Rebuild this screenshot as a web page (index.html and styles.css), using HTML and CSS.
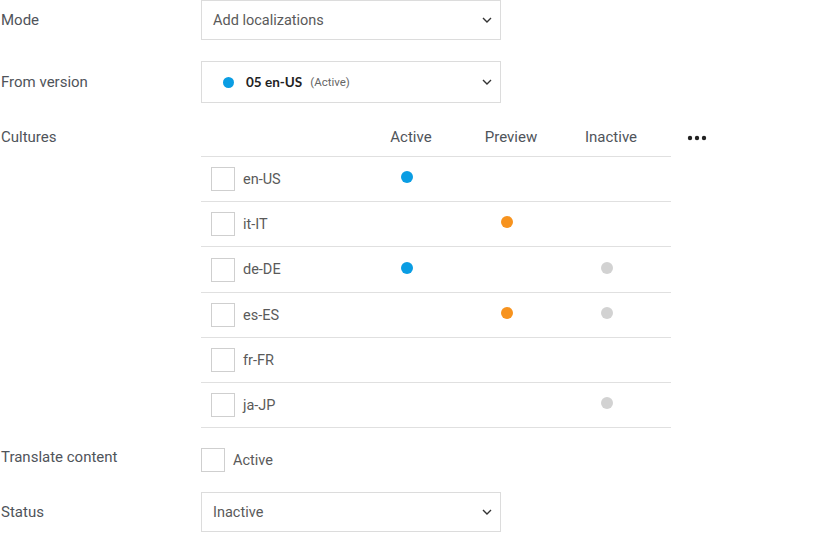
FILE: index.html
```html
<!DOCTYPE html>
<html>
<head>
<meta charset="utf-8">
<link rel="stylesheet" href="styles.css">
</head>
<body>
<div class="form">
  <div class="row row-mode">
    <div class="label">Mode</div>
    <div class="select">
      <span class="value">Add localizations</span>
      <svg class="chev" width="10" height="6" viewBox="0 0 10 6"><path d="M1 1 L5 5 L9 1" fill="none" stroke="#333" stroke-width="1.4"/></svg>
    </div>
  </div>

  <div class="row row-version">
    <div class="label">From version</div>
    <div class="select select-version">
      <span class="vdot"></span>
      <span class="vname">05 en-US</span>
      <span class="vstate">(Active)</span>
      <svg class="chev" width="10" height="6" viewBox="0 0 10 6"><path d="M1 1 L5 5 L9 1" fill="none" stroke="#333" stroke-width="1.4"/></svg>
    </div>
  </div>

  <div class="cultures">
    <div class="label label-cultures">Cultures</div>
    <div class="table">
      <div class="thead">
        <span></span>
        <span class="th">Active</span>
        <span class="th">Preview</span>
        <span class="th">Inactive</span>
        <span></span>
      </div>
      <div class="tr">
        <span class="culture"><span class="box"></span>en-US</span>
        <span class="cell"><i class="dot blue"></i></span>
        <span class="cell"></span>
        <span class="cell"></span>
        <span></span>
      </div>
      <div class="tr">
        <span class="culture"><span class="box"></span>it-IT</span>
        <span class="cell"></span>
        <span class="cell"><i class="dot orange"></i></span>
        <span class="cell"></span>
        <span></span>
      </div>
      <div class="tr tall">
        <span class="culture"><span class="box"></span>de-DE</span>
        <span class="cell"><i class="dot blue"></i></span>
        <span class="cell"></span>
        <span class="cell"><i class="dot gray"></i></span>
        <span></span>
      </div>
      <div class="tr">
        <span class="culture"><span class="box"></span>es-ES</span>
        <span class="cell"></span>
        <span class="cell"><i class="dot orange"></i></span>
        <span class="cell"><i class="dot gray"></i></span>
        <span></span>
      </div>
      <div class="tr">
        <span class="culture"><span class="box"></span>fr-FR</span>
        <span class="cell"></span>
        <span class="cell"></span>
        <span class="cell"></span>
        <span></span>
      </div>
      <div class="tr">
        <span class="culture"><span class="box"></span>ja-JP</span>
        <span class="cell"></span>
        <span class="cell"></span>
        <span class="cell"><i class="dot gray"></i></span>
        <span></span>
      </div>
    </div>
    <div class="more">
      <svg width="20" height="6" viewBox="0 0 20 6"><circle cx="3" cy="3" r="2.2" fill="#222"/><circle cx="10" cy="3" r="2.2" fill="#222"/><circle cx="17" cy="3" r="2.2" fill="#222"/></svg>
    </div>
  </div>

  <div class="row row-translate">
    <div class="label label-translate">Translate content</div>
    <div class="check"><span class="box"></span><span class="check-text">Active</span></div>
  </div>

  <div class="row row-status">
    <div class="label">Status</div>
    <div class="select">
      <span class="value">Inactive</span>
      <svg class="chev" width="10" height="6" viewBox="0 0 10 6"><path d="M1 1 L5 5 L9 1" fill="none" stroke="#333" stroke-width="1.4"/></svg>
    </div>
  </div>
</div>
</body>
</html>
```

FILE: styles.css
```css
* { box-sizing: border-box; }
body {
  margin: 0;
  background: #fff;
  font-family: Roboto, "Noto Sans", Arial, sans-serif;
  color: #4a4a4a;
}
.form {
  display: flex;
  flex-direction: column;
}
.row {
  display: flex;
  align-items: center;
}
.label {
  width: 201px;
  flex: none;
  padding-left: 1px;
  font-size: 15px;
  color: #4f545a;
}
.select {
  width: 300px;
  height: 40px;
  border: 1px solid #dcdcdc;
  display: flex;
  align-items: center;
  padding: 0 8px 0 11px;
  font-size: 14.5px;
  color: #5a5a5a;
}
.select .value { flex: 1; }
.row-version { margin-top: 21px; }
.select-version { height: 42px; padding-left: 21px; }
.vdot {
  width: 11px; height: 11px; border-radius: 50%;
  background: #0a9de3;
  margin-right: 12px;
}
.vname {
  font-family: Lato, "Open Sans", sans-serif;
  font-weight: 700;
  font-size: 13.5px;
  color: #222;
  margin-right: 8px;
}
.vstate {
  flex: 1;
  font-size: 11.5px;
  color: #666;
}
.cultures {
  display: flex;
  align-items: flex-start;
  margin-top: 16px;
}
.label-cultures {
  height: 38px;
  line-height: 37px;
}
.table {
  width: 470px;
}
.thead, .tr {
  display: grid;
  grid-template-columns: 156px 100px 100px 100px 14px;
  border-bottom: 1px solid #e0e0e0;
}
.thead {
  height: 38px;
  align-items: center;
  padding-bottom: 1px;
}
.th {
  text-align: center;
  font-size: 15px;
  color: #4f545a;
  padding-left: 8px;
}
.tr { height: 45px; align-items: center; }
.tr.tall { height: 46px; }
.culture {
  display: flex;
  align-items: center;
  padding-left: 10px;
  font-size: 14.5px;
  color: #5a5a5a;
}
.box {
  width: 24px; height: 24px;
  border: 1px solid #cfcfcf;
  margin-right: 8px;
  display: inline-block;
  background: #fff;
  flex: none;
}
.cell {
  display: flex;
  justify-content: center;
  align-items: center;
  padding-bottom: 4px;
}
.dot {
  width: 12px; height: 12px; border-radius: 50%;
  display: block;
}
.blue { background: #0a9de3; }
.orange { background: #f7931e; }
.gray { background: #d2d2d2; }
.more {
  margin-left: 16px;
  height: 38px;
  display: flex;
  align-items: center;
}
.row-translate {
  margin-top: 20px;
  align-items: flex-start;
}
.label-translate { line-height: 18px; }
.check {
  display: flex;
  align-items: center;
  font-size: 14.5px;
  color: #5a5a5a;
}
.check-text { padding-top: 1px; }
.row-status { margin-top: 20px; }
```
